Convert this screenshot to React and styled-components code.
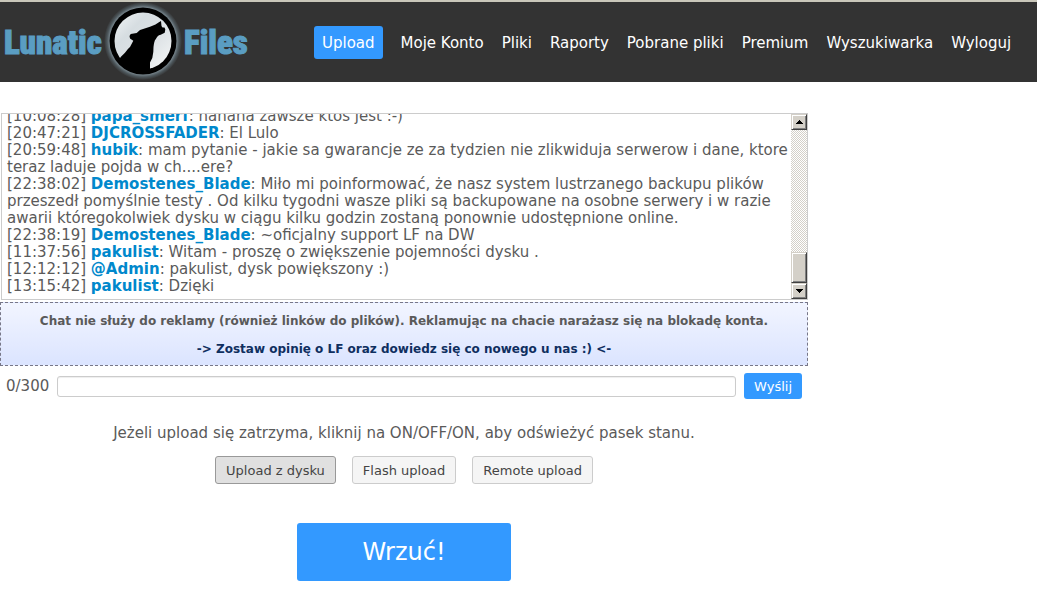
import React, { useLayoutEffect, useRef, useState } from "react";
import styled, { createGlobalStyle } from "styled-components";

const GlobalStyle = createGlobalStyle`
  *, *::before, *::after { box-sizing: border-box; }
  body {
    margin: 0;
    background: #fff;
    color: #5a5a5a;
    font: 15px/17px Verdana, "DejaVu Sans", sans-serif;
  }
  button, input { font-family: inherit; }
`;

const Header = styled.header`
  display: flex;
  align-items: center;
  min-height: 82px;
  border-top: 2px solid #c9c7ba;
  background: #333;
`;

const Logo = styled.a`
  display: block;
  flex: none;
  width: 250px;
  height: 72px;
`;

const LogoArt = styled.svg`
  display: block;
  width: 100%;
  height: 100%;
  overflow: visible;
`;

const LogoText = styled.text`
  fill: #5a9dc2;
  stroke: #5a9dc2;
  stroke-width: 1px;
  font: 900 33px "Roboto Condensed", "Liberation Sans Narrow", sans-serif;
`;

const Nav = styled.nav`
  display: flex;
  flex-wrap: wrap;
  align-items: center;
  gap: 0 18px;
  margin-left: 64px;
`;

const NavLink = styled.a`
  padding: 9px ${(p) => (p.$active ? "8px" : "0")} 7px;
  border-radius: 3px;
  background: ${(p) => (p.$active ? "#39f" : "transparent")};
  color: #fff;
  text-decoration: none;
  white-space: nowrap;
`;

const Main = styled.main`
  width: 100%;
  max-width: 808px;
  padding-top: 31px;
`;

const Chat = styled.section`
  display: flex;
  height: 187px;
  margin-left: 1px;
  border: 1px solid #ccc;
`;

const Messages = styled.div`
  flex: 1;
  min-width: 0;
  padding: 4px 0 4px 5px;
  overflow-y: scroll;
  scrollbar-width: none;
`;

const Message = styled.p`
  margin: 0;
`;

const Nick = styled.b`
  color: #08c;
`;

const ScrollBar = styled.div`
  display: flex;
  flex-direction: column;
  flex: none;
  width: 16px;
  background: repeating-conic-gradient(#d4d0c8 0 25%, #fff 0 50%) 0 0 / 2px 2px;
`;

const Bevel = `
  border: 1px solid;
  border-color: #d4d0c8 #404040 #404040 #d4d0c8;
  background: #d4d0c8;
  box-shadow: inset 1px 1px #fff, inset -1px -1px #808080;
`;

const ScrollButton = styled.button`
  ${Bevel}
  display: flex;
  align-items: center;
  justify-content: center;
  height: 16px;
  padding: 0;
  border-radius: 0;
`;

const Track = styled.div`
  display: flex;
  flex: 1;
  flex-direction: column;
  justify-content: flex-end;
`;

const Thumb = styled.div`
  ${Bevel}
  height: 31px;
`;

const Notice = styled.aside`
  display: flex;
  flex-direction: column;
  align-items: center;
  gap: 11px;
  margin-top: 2px;
  padding: 10px 8px 7px;
  border: 1px dashed #778;
  background: linear-gradient(#f2f5ff, #dbe4ff);
  font-size: 12px;
  font-weight: bold;
  text-align: center;
`;

const NoticeText = styled.p`
  margin: 0;
`;

const NoticeLink = styled.a`
  color: #0f2f5f;
  text-decoration: none;
`;

const SendForm = styled.form`
  display: flex;
  align-items: center;
  gap: 8px;
  margin-top: 7px;
  padding: 0 6px;
`;

const Counter = styled.label`
  flex: none;
`;

const MessageInput = styled.input`
  flex: 1;
  min-width: 0;
  height: 21px;
  padding: 0 4px;
  border: 1px solid #ccc;
  border-radius: 3px;
  background: #fff;
  box-shadow: inset 0 1px 1px #eee;
  color: #555;
  font-size: 13px;
`;

const SendButton = styled.button`
  flex: none;
  height: 26px;
  padding: 0 10px;
  border: 0;
  border-radius: 3px;
  background: #39f;
  color: #fff;
  font-size: 13px;
`;

const UploadPanel = styled.section`
  display: flex;
  flex-direction: column;
  align-items: center;
  padding-top: 26px;
`;

const Hint = styled.p`
  margin: 0;
`;

const Modes = styled.div`
  display: flex;
  flex-wrap: wrap;
  justify-content: center;
  gap: 16px;
  margin-top: 14px;
`;

const ModeButton = styled.button`
  height: 28px;
  padding: 0 10px;
  border: 1px solid ${(p) => (p.$active ? "#999" : "#ccc")};
  border-radius: 3px;
  background: ${(p) => (p.$active ? "#e0e0e0" : "#f5f5f5")};
  color: #444;
  font-size: 13px;
`;

const UploadButton = styled.button`
  height: 58px;
  margin-top: 39px;
  padding: 0 65px;
  border: 0;
  border-radius: 3px;
  background: #39f;
  color: #fff;
  font-size: 24px;
`;

const links = ["Upload", "Moje Konto", "Pliki", "Raporty", "Pobrane pliki", "Premium", "Wyszukiwarka", "Wyloguj"];

const messages = [
  ["10:08:28", "papa_smerf", "hahaha zawsze ktos jest :-)"],
  ["20:47:21", "DJCROSSFADER", "El Lulo"],
  ["20:59:48", "hubik", "mam pytanie - jakie sa gwarancje ze za tydzien nie zlikwiduja serwerow i dane, ktore teraz laduje pojda w ch....ere?"],
  ["22:38:02", "Demostenes_Blade", "Miło mi poinformować, że nasz system lustrzanego backupu plików przeszedł pomyślnie testy . Od kilku tygodni wasze pliki są backupowane na osobne serwery i w razie awarii któregokolwiek dysku w ciągu kilku godzin zostaną ponownie udostępnione online."],
  ["22:38:19", "Demostenes_Blade", "~oficjalny support LF na DW"],
  ["11:37:56", "pakulist", "Witam - proszę o zwiększenie pojemności dysku ."],
  ["12:12:12", "@Admin", "pakulist, dysk powiększony :)"],
  ["13:15:42", "pakulist", "Dzięki"],
];

const modes = ["Upload z dysku", "Flash upload", "Remote upload"];

function WolfLogo() {
  return (
    <LogoArt viewBox="0 0 250 72" role="img" aria-label="Lunatic Files">
      <defs>
        <radialGradient id="halo">
          <stop offset="0.84" stopColor="#84939b" />
          <stop offset="0.92" stopColor="#4e585d" />
          <stop offset="1" stopColor="#333" />
        </radialGradient>
        <linearGradient id="moon" x1="0" y1="0" x2="1" y2="1">
          <stop offset="0" stopColor="#f2f5f6" />
          <stop offset="0.3" stopColor="#d6dde1" />
          <stop offset="0.6" stopColor="#dde2e5" />
          <stop offset="1" stopColor="#f6f8f8" />
        </linearGradient>
      </defs>
      <LogoText x="4" y="48">Lunatic</LogoText>
      <circle cx="143" cy="35" r="39" fill="url(#halo)" />
      <circle cx="143" cy="35" r="33.500" fill="#000" />
      <circle cx="143" cy="35" r="28.500" fill="url(#moon)" />
      <path
        d="M119 54 120.700 51 125 46.700C127 44 128 43 130 41L133.300 34.700 130 32.500 129.500 30 130.700 28 136.700 27 140 24 150 20.700 155.500 18.500 158.500 16.500 161 15 161.500 20 162.500 21.500 164.500 21.500 165.300 23.500 164.700 26.700 160.700 28.700C158 29 157 31 156 32.700 154 35 154 38 153.500 41L153.300 46 152.300 52 150 56.500 150 64C137 67 124 63 119 54Z"
        fill="#000"
      />
      <LogoText x="184" y="48">Files</LogoText>
    </LogoArt>
  );
}

function Arrow({ up }) {
  return (
    <svg width="7" height="4" viewBox="0 0 7 4" aria-hidden="true" shapeRendering="crispEdges">
      <path d={up ? "M0 4h7L3.500 0z" : "M0 0h7L3.500 4z"} />
    </svg>
  );
}

export default function App() {
  const list = useRef(null);
  const [text, setText] = useState("");
  const [mode, setMode] = useState(modes[0]);

  useLayoutEffect(() => {
    list.current.scrollTop = list.current.scrollHeight;
  }, []);

  const scroll = (step) => {
    list.current.scrollTop += step;
  };

  return (
    <>
      <GlobalStyle />
      <Header>
        <Logo href="#"><WolfLogo /></Logo>
        <Nav>
          {links.map((name, i) => (
            <NavLink key={name} href="#" $active={i === 0}>{name}</NavLink>
          ))}
        </Nav>
      </Header>
      <Main>
        <Chat>
          <Messages ref={list}>
            {messages.map(([time, nick, body]) => (
              <Message key={time}>[{time}] <Nick>{nick}</Nick>: {body}</Message>
            ))}
          </Messages>
          <ScrollBar>
            <ScrollButton type="button" aria-label="W górę" onClick={() => scroll(-17)}><Arrow up /></ScrollButton>
            <Track><Thumb /></Track>
            <ScrollButton type="button" aria-label="W dół" onClick={() => scroll(17)}><Arrow /></ScrollButton>
          </ScrollBar>
        </Chat>
        <Notice>
          <NoticeText>Chat nie służy do reklamy (również linków do plików). Reklamując na chacie narażasz się na blokadę konta.</NoticeText>
          <NoticeLink href="#">-&gt; Zostaw opinię o LF oraz dowiedz się co nowego u nas :) &lt;-</NoticeLink>
        </Notice>
        <SendForm onSubmit={(e) => e.preventDefault()}>
          <Counter htmlFor="message">{text.length}/300</Counter>
          <MessageInput id="message" type="text" maxLength={300} value={text} onChange={(e) => setText(e.target.value)} />
          <SendButton type="submit">Wyślij</SendButton>
        </SendForm>
        <UploadPanel>
          <Hint>Jeżeli upload się zatrzyma, kliknij na ON/OFF/ON, aby odświeżyć pasek stanu.</Hint>
          <Modes>
            {modes.map((name) => (
              <ModeButton key={name} type="button" $active={name === mode} onClick={() => setMode(name)}>{name}</ModeButton>
            ))}
          </Modes>
          <UploadButton type="button">Wrzuć!</UploadButton>
        </UploadPanel>
      </Main>
    </>
  );
}
